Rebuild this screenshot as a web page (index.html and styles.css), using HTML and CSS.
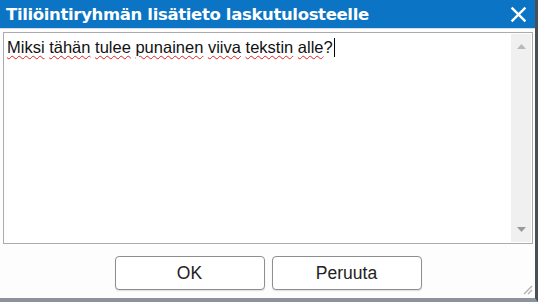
FILE: index.html
```html
<!DOCTYPE html>
<html lang="fi">
<head>
<meta charset="utf-8">
<title>Tiliöintiryhmän lisätieto laskutulosteelle</title>
<link rel="stylesheet" href="styles.css">
</head>
<body>
<div class="dialog">
  <div class="titlebar">
    <span class="title">Tiliöintiryhmän lisätieto laskutulosteelle</span>
    <svg class="close" width="17" height="17" viewBox="0 0 16 16"><path d="M1.5 1.5 L14.5 14.5 M14.5 1.5 L1.5 14.5" stroke="#fff" stroke-width="2.2" fill="none"/></svg>
  </div>
  <div class="body">
    <div class="textbox">
      <div class="text"><span class="sp">Miksi</span> <span class="sp">tähän</span> <span class="sp">tulee</span> <span class="sp">punainen</span> <span class="sp">viiva</span> <span class="sp">tekstin</span> <span class="sp">alle</span>?<span class="caret"></span></div>
      <div class="scrollbar">
        <svg width="9" height="5" viewBox="0 0 9 5"><path d="M0 5 L4.5 0 L9 5 Z" fill="#b9b9b9"/></svg>
        <svg width="9" height="5" viewBox="0 0 9 5"><path d="M0 0 L4.5 5 L9 0 Z" fill="#9a9a9a"/></svg>
      </div>
    </div>
    <div class="buttons">
      <button class="btn">OK</button>
      <button class="btn">Peruuta</button>
    </div>
    <svg class="grip" width="12" height="12" viewBox="0 0 12 12"><path d="M11 3 L3 11 M11 7 L7 11" stroke="#b0b0b0" stroke-width="1.3"/></svg>
  </div>
</div>
</body>
</html>
```
FILE: styles.css
```css
html, body {
  margin: 0;
  padding: 0;
  background: #ffffff;
}
body {
  width: 538px;
  height: 302px;
  overflow: hidden;
  font-family: "Liberation Sans", Arial, sans-serif;
}
.dialog {
  box-sizing: border-box;
  width: 538px;
  height: 302px;
  display: flex;
  flex-direction: column;
  border-right: 3px solid #4a4f55;
  border-bottom: 4px solid #8d939a;
  background: #ffffff;
}
.titlebar {
  height: 28px;
  background: #0b74c4;
  display: flex;
  align-items: center;
  justify-content: space-between;
  padding: 0 8px 0 6px;
  flex-shrink: 0;
}
.title {
  color: #ffffff;
  font-family: "DejaVu Sans", Verdana, sans-serif;
  font-weight: bold;
  font-size: 16.5px;
  letter-spacing: -0.35px;
}
.close {
  display: block;
  margin-top: 1px;
}
.body {
  position: relative;
  flex: 1;
  display: flex;
  flex-direction: column;
  padding: 3px 2px 0 3px;
  background: #fdfdfd;
  border-top: 1px solid #d4dbe3;
}
.textbox {
  height: 212px;
  border: 1px solid #a8acb0;
  background: #ffffff;
  display: flex;
  box-sizing: border-box;
}
.text {
  flex: 1;
  padding: 5px 3px;
  font-size: 16.5px;
  color: #111111;
  line-height: 18px;
}
.sp {
  text-decoration: underline wavy #e02020;
  text-decoration-thickness: 1.3px;
  text-underline-offset: 2px;
}
.caret {
  display: inline-block;
  width: 1px;
  height: 19px;
  background: #000;
  vertical-align: -4px;
  margin-left: 1px;
}
.scrollbar {
  width: 20px;
  margin: 1px 1px 1px 0;
  background: #f0f0f0;
  display: flex;
  flex-direction: column;
  justify-content: space-between;
  align-items: center;
  padding: 10px 0 10px;
}
.buttons {
  display: flex;
  justify-content: center;
  gap: 7px;
  padding-top: 12px;
}
.btn {
  width: 150px;
  height: 34px;
  border: 1px solid #8e8e8e;
  border-radius: 4px;
  background: #ffffff;
  font-family: "Liberation Sans", Arial, sans-serif;
  font-size: 17.5px;
  color: #222222;
  box-shadow: 0 1px 1px rgba(0,0,0,0.12);
}
.grip {
  position: absolute;
  right: 2px;
  bottom: 3px;
}
```
